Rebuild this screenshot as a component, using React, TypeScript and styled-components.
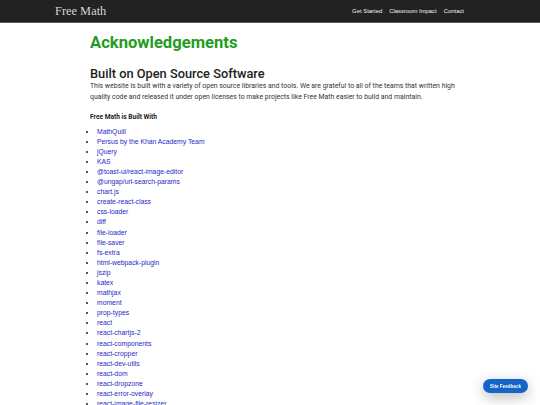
import React from 'react';
import styled, { createGlobalStyle } from 'styled-components';

const GlobalStyle = createGlobalStyle`
  html, body {
    margin: 0;
    padding: 0;
    background: #ffffff;
  }
  body {
    font-family: Roboto, "Liberation Sans", Arial, sans-serif;
    overflow: hidden;
  }
`;

const NavBar = styled.header`
  height: 22px;
  background: #222222;
  border-bottom: 1px solid #5c5c5c;
  display: flex;
  align-items: center;
  justify-content: space-between;
  padding: 0 76px 0 55px;
`;

const Brand = styled.div`
  font-family: "Liberation Serif", "Times New Roman", serif;
  font-size: 12.4px;
  color: #d4d4d4;
  margin-top: 1px;
`;

const NavLinks = styled.nav`
  display: flex;
  gap: 7px;
`;

const NavLink = styled.a`
  font-family: "Liberation Sans", Arial, sans-serif;
  font-size: 5.9px;
  color: #f2f2f2;
  text-decoration: none;
`;

const Content = styled.main`
  margin-left: 90px;
  width: 370px;
`;

const Title = styled.h1`
  margin: 10px 0 0;
  font-size: 16.6px;
  line-height: 20px;
  font-weight: 700;
  color: #229c22;
`;

const SectionTitle = styled.h2`
  margin: 13px 0 0;
  font-size: 12.8px;
  line-height: 15px;
  font-weight: 500;
  color: #222222;
`;

const Paragraph = styled.p`
  margin: 0;
  font-size: 6.9px;
  line-height: 10.8px;
  color: #333333;
`;

const ListTitle = styled.h4`
  margin: 9px 0 0;
  font-size: 6.6px;
  line-height: 10px;
  font-weight: 700;
  color: #222222;
`;

const LibList = styled.ul`
  margin: 5px 0 0;
  padding-left: 7px;
  list-style: disc;
  font-family: "Liberation Sans", Arial, sans-serif;
  font-size: 6.8px;
  line-height: 10.1px;
  color: #222222;
`;

const LibItem = styled.li`
  padding-left: 0;
`;

const LibLink = styled.a`
  color: #1f1fc8;
  text-decoration: none;
`;

const FeedbackButton = styled.button`
  position: fixed;
  right: 12px;
  bottom: 12px;
  height: 14px;
  padding: 0 7px;
  border: none;
  border-radius: 7px;
  background: #1565c8;
  color: #ffffff;
  font-family: "Liberation Sans", Arial, sans-serif;
  font-weight: 700;
  font-size: 4.6px;
  box-shadow: 0 4px 14px rgba(0, 0, 0, 0.28);
`;

const libraries = [
  'MathQuill',
  'Persus by the Khan Academy Team',
  'jQuery',
  'KAS',
  '@toast-ui/react-image-editor',
  '@ungap/url-search-params',
  'chart.js',
  'create-react-class',
  'css-loader',
  'diff',
  'file-loader',
  'file-saver',
  'fs-extra',
  'html-webpack-plugin',
  'jszip',
  'katex',
  'mathjax',
  'moment',
  'prop-types',
  'react',
  'react-chartjs-2',
  'react-components',
  'react-cropper',
  'react-dev-utils',
  'react-dom',
  'react-dropzone',
  'react-error-overlay',
  'react-image-file-resizer',
  'react-scripts',
];

const App = () => {
  return (
    <>
      <GlobalStyle />
      <NavBar>
        <Brand>Free Math</Brand>
        <NavLinks>
          <NavLink href="#">Get Started</NavLink>
          <NavLink href="#">Classroom Impact</NavLink>
          <NavLink href="#">Contact</NavLink>
        </NavLinks>
      </NavBar>
      <Content>
        <Title>Acknowledgements</Title>
        <SectionTitle>Built on Open Source Software</SectionTitle>
        <Paragraph>
          This website is built with a variety of open source libraries and tools. We are grateful to all of the
          teams that written high quality code and released it under open licenses to make projects like Free Math
          easier to build and maintain.
        </Paragraph>
        <ListTitle>Free Math is Built With</ListTitle>
        <LibList>
          {libraries.map((lib) => (
            <LibItem key={lib}>
              <LibLink href="#">{lib}</LibLink>
            </LibItem>
          ))}
        </LibList>
      </Content>
      <FeedbackButton>Site Feedback</FeedbackButton>
    </>
  );
};

export default App;
